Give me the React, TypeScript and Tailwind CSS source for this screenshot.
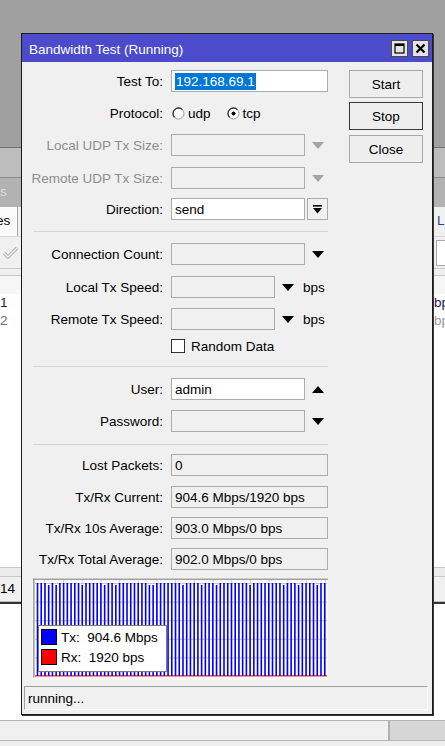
import React from "react";

const FONT = "font-['Liberation_Sans',Arial,sans-serif]";

function Tri({ up = false, color = "#000" }: { up?: boolean; color?: string }) {
  return (
    <svg width="12" height="7" viewBox="0 0 12 7" className="shrink-0">
      {up ? (
        <polygon points="0,7 12,7 6,0" fill={color} />
      ) : (
        <polygon points="0,0 12,0 6,7" fill={color} />
      )}
    </svg>
  );
}

function Row({
  label,
  disabled = false,
  className = "",
  children,
}: {
  label: string;
  disabled?: boolean;
  className?: string;
  children?: React.ReactNode;
}) {
  return (
    <div className={`flex h-[22px] items-center ${className}`}>
      <div
        className={`w-[149px] shrink-0 pr-[8px] pt-[2px] text-right whitespace-nowrap ${
          disabled ? "text-[#8d8d8d]" : "text-black"
        }`}
      >
        {label}
      </div>
      {children}
    </div>
  );
}

function Field({
  w,
  white = false,
  children,
}: {
  w: string;
  white?: boolean;
  children?: React.ReactNode;
}) {
  return (
    <div
      className={`h-[22px] ${w} shrink-0 border border-[#acacac] ${
        white ? "bg-white" : "bg-[#f0f0f0]"
      } pl-[3px] pt-[1px] leading-[20px] whitespace-nowrap overflow-hidden`}
    >
      {children}
    </div>
  );
}

function Radio({ checked = false }: { checked?: boolean }) {
  return (
    <svg width="13" height="13" viewBox="0 0 13 13" className="shrink-0">
      <circle cx="6.5" cy="6.5" r="5.5" fill="#fff" stroke="#9a9a9a" strokeWidth="1" />
      <path d="M2.6 10.4 A5.5 5.5 0 0 1 10.4 2.6" fill="none" stroke="#3a3a3a" strokeWidth="1.3" />
      {checked && <circle cx="6.5" cy="6.5" r="2" fill="#000" />}
    </svg>
  );
}

function Separator({ className = "" }: { className?: string }) {
  return <div className={`ml-[11px] h-px w-[295px] bg-[#d6d6d6] ${className}`} />;
}

function Button({ label, focused = false, className = "" }: { label: string; focused?: boolean; className?: string }) {
  return (
    <div
      className={`flex h-[28px] w-[74px] items-center justify-center border pt-[2px] ${
        focused ? "border-[#3a3a3a]" : "border-[#a8a8a8]"
      } bg-[#eeeeee] ${className}`}
    >
      {label}
    </div>
  );
}

function Graph() {
  const bars: React.ReactNode[] = [];
  for (let i = 0; i < 78; i++) {
    const x = 4.7 + i * 3.73;
    const short = (i * 7) % 9 === 3 || i % 13 === 5;
    const top = short ? 7 : 5;
    bars.push(<rect key={i} x={x} y={top} width={1.6} height={98 - top} fill="#0000ff" />);
  }
  const hLines: React.ReactNode[] = [];
  for (let k = 0; k < 5; k++) {
    const y = 5 + k * 18.6;
    hLines.push(<rect key={"h" + k} x={3} y={y} width={292} height={1} fill="#c8c8c8" />);
  }
  const vLines: React.ReactNode[] = [];
  for (let k = 0; k < 16; k++) {
    const x = 12.3 + k * 18.7;
    vLines.push(<rect key={"v" + k} x={x} y={2} width={1} height={96} fill="#d0d0d0" />);
  }
  return (
    <div className="relative ml-[10px] mt-[8px] h-[102px] w-[296px]">
      <svg width="296" height="102" viewBox="0 0 296 102" className="block">
        <rect x="0" y="0" width="296" height="102" fill="#f7f7f7" />
        <rect x="3" y="2" width="292" height="97" fill="#ffffff" />
        <rect x="1" y="0.5" width="295" height="1.6" fill="#a0a0a0" />
        <rect x="1" y="0.5" width="1.6" height="99" fill="#a0a0a0" />
        {vLines}
        {hLines}
        <rect x="3" y="97.2" width="292" height="1.3" fill="#ff2020" />
        {bars}
      </svg>
      <div className="absolute left-[6px] top-[47px] h-[47px] w-[129px] border border-[#7a7a7a] bg-white">
        <div className="ml-[2px] mt-[3px] flex h-[16px] items-center">
          <div className="h-[16px] w-[16px] border border-black bg-[#0000ff]" />
          <span className="ml-[4px] pt-[2px] whitespace-pre">Tx:  904.6 Mbps</span>
        </div>
        <div className="ml-[2px] mt-[4px] flex h-[16px] items-center">
          <div className="h-[16px] w-[16px] border border-black bg-[#ff0000]" />
          <span className="ml-[4px] pt-[2px] whitespace-pre">Rx:  1920 bps</span>
        </div>
      </div>
    </div>
  );
}

function Background() {
  return (
    <div className="flex h-full w-full flex-col">
      <div className="h-[147px] shrink-0 bg-[#a0a0a0]" />
      <div className="h-px shrink-0 bg-[#6e6e6e]" />
      <div className="h-[29px] shrink-0 bg-[#bdbdbd]" />
      <div className="h-px shrink-0 bg-[#8a8a8a]" />
      <div className="flex h-[29px] shrink-0 items-center bg-[#b2b2b2]">
        <span className="text-[#dcdcdc]">s</span>
      </div>
      <div className="flex h-[29px] shrink-0 items-stretch justify-between bg-[#f0f0f0]">
        <div className="flex w-[18px] items-center overflow-hidden border-r border-[#a8a8a8] bg-[#fbfbfb]">
          <span className="-ml-[4px]">es</span>
        </div>
        <div className="flex w-[8px] items-center overflow-hidden">
          <span className="text-[#2a3d9c]">L</span>
        </div>
      </div>
      <div className="flex h-[32px] shrink-0 items-center justify-between border-t border-[#d8d8d8] bg-[#f0f0f0]">
        <svg width="18" height="16" viewBox="0 0 18 16" className="ml-[2px]">
          <path d="M2 8 L6 12 L15 3" fill="none" stroke="#b0b0b0" strokeWidth="3.2" strokeLinejoin="miter" />
          <path d="M2 8 L6 12 L15 3" fill="none" stroke="#f4f4f4" strokeWidth="1.4" strokeLinejoin="miter" />
        </svg>
        <div className="h-[26px] w-[9px] border border-r-0 border-[#a8a8a8] bg-white" />
      </div>
      <div className="h-[8px] shrink-0 border-y border-[#c8c8c8] bg-[#f0f0f0]" />
      <div className="h-[18px] shrink-0 bg-[#f6f6f6]" />
      <div className="flex h-[18px] shrink-0 items-center justify-between bg-white">
        <span className="text-[#1a1a5a]">1</span>
        <span className="w-[11px] overflow-hidden text-[#1a1a5a]">bp</span>
      </div>
      <div className="flex h-[18px] shrink-0 items-center justify-between bg-white">
        <span className="text-[#6a6a6a]">2</span>
        <span className="w-[11px] overflow-hidden text-[#9a9a9a]">bp</span>
      </div>
      <div className="flex-1 bg-white" />
      <div className="h-[10px] shrink-0 border-y border-[#c8c8c8] bg-[#ececec]" />
      <div className="flex h-[25px] shrink-0 items-center border-b border-[#c0c0c0] bg-[#f0f0f0]">
        <span>14</span>
      </div>
      <div className="h-[2px] shrink-0 bg-[#333]" />
      <div className="h-[116px] shrink-0 bg-white" />
      <div className="flex h-[21px] shrink-0 border-y border-[#b4b4b4]">
        <div className="w-[390px] border-r-2 border-[#b0b0b0] bg-[#f0f0f0]" />
        <div className="flex-1 bg-[#d6d6d6]" />
      </div>
      <div className="h-[5px] shrink-0 bg-[#efefef]" />
    </div>
  );
}

export default function App() {
  return (
    <div className={`relative h-[746px] w-[445px] overflow-hidden bg-[#a0a0a0] text-[13.5px] text-black ${FONT}`}>
      <Background />
      <div className="absolute left-[21px] top-[33px] flex h-[682px] w-[412px] flex-col border border-[#1c1c1c] bg-[#f0f0f0] shadow-[1px_1px_0_#3a3a3a]">
        {/* Title bar */}
        <div className="flex h-[28px] shrink-0 items-center bg-[#4b4bcb] pl-[7px] pr-[3px]">
          <span className="flex-1 pt-[4px] text-white">Bandwidth Test (Running)</span>
          <svg width="17" height="17" viewBox="0 0 17 17" className="shrink-0">
            <rect x="0.5" y="0.5" width="16" height="16" fill="#e4e4e4" stroke="#4a4a4a" />
            <rect x="4" y="4" width="9" height="9" fill="none" stroke="#000" strokeWidth="1.2" />
            <rect x="4" y="4" width="9" height="2" fill="#000" />
          </svg>
          <svg width="17" height="17" viewBox="0 0 17 17" className="ml-[4px] shrink-0">
            <rect x="0.5" y="0.5" width="16" height="16" fill="#e4e4e4" stroke="#4a4a4a" />
            <path d="M4.5 4.5 L12.5 12.5 M12.5 4.5 L4.5 12.5" stroke="#000" strokeWidth="2.2" />
          </svg>
        </div>

        {/* Body */}
        <div className="flex flex-1 flex-col">
          <div className="flex pt-[8px]">
            <div className="flex w-[306px] shrink-0 flex-col">
              <Row label="Test To:">
                <Field w="w-[157px]" white>
                  <span className="bg-[#0078d7] px-[1px] py-[1px] text-white">192.168.69.1</span>
                </Field>
              </Row>
              <Row label="Protocol:" className="mt-[10px]">
                <div className="ml-[1px] flex items-center">
                  <Radio />
                  <span className="ml-[3px] pt-[2px]">udp</span>
                  <div className="ml-[16px]">
                    <Radio checked />
                  </div>
                  <span className="ml-[3px] pt-[2px]">tcp</span>
                </div>
              </Row>
              <Row label="Local UDP Tx Size:" disabled className="mt-[10px]">
                <Field w="w-[134px]" />
                <div className="ml-[7px]">
                  <Tri color="#a4a4a4" />
                </div>
              </Row>
              <Row label="Remote UDP Tx Size:" disabled className="mt-[11px]">
                <Field w="w-[134px]" />
                <div className="ml-[7px]">
                  <Tri color="#a4a4a4" />
                </div>
              </Row>
              <Row label="Direction:" className="mt-[9px]">
                <Field w="w-[134px]" white>
                  send
                </Field>
                <div className="ml-[2px] flex h-[22px] w-[22px] items-center justify-center border border-[#acacac] bg-[#f0f0f0]">
                  <svg width="9" height="9" viewBox="0 0 9 9">
                    <rect x="0" y="0" width="9" height="1.6" fill="#000" />
                    <polygon points="0,3 9,3 4.5,8.5" fill="#000" />
                  </svg>
                </div>
              </Row>
              <Separator className="mt-[11px]" />
              <Row label="Connection Count:" className="mt-[11px]">
                <Field w="w-[134px]" />
                <div className="ml-[7px]">
                  <Tri />
                </div>
              </Row>
              <Row label="Local Tx Speed:" className="mt-[11px]">
                <Field w="w-[104px]" />
                <div className="ml-[7px]">
                  <Tri />
                </div>
                <span className="ml-[9px] pt-[2px]">bps</span>
              </Row>
              <Row label="Remote Tx Speed:" className="mt-[10px]">
                <Field w="w-[104px]" />
                <div className="ml-[7px]">
                  <Tri />
                </div>
                <span className="ml-[9px] pt-[2px]">bps</span>
              </Row>
              <div className="mt-[6px] flex h-[20px] items-center pl-[149px]">
                <div className="h-[14px] w-[14px] border border-[#333] bg-white" />
                <span className="ml-[6px] pt-[2px]">Random Data</span>
              </div>
              <Separator className="mt-[10px]" />
              <Row label="User:" className="mt-[11px]">
                <Field w="w-[134px]" white>
                  admin
                </Field>
                <div className="ml-[7px]">
                  <Tri up />
                </div>
              </Row>
              <Row label="Password:" className="mt-[10px]">
                <Field w="w-[134px]" />
                <div className="ml-[7px]">
                  <Tri />
                </div>
              </Row>
              <Separator className="mt-[12px]" />
              <Row label="Lost Packets:" className="mt-[9px]">
                <Field w="w-[157px]">0</Field>
              </Row>
              <Row label="Tx/Rx Current:" className="mt-[10px]">
                <Field w="w-[157px]">904.6 Mbps/1920 bps</Field>
              </Row>
              <Row label="Tx/Rx 10s Average:" className="mt-[9px]">
                <Field w="w-[157px]">903.0 Mbps/0 bps</Field>
              </Row>
              <Row label="Tx/Rx Total Average:" className="mt-[9px]">
                <Field w="w-[157px]">902.0 Mbps/0 bps</Field>
              </Row>
              <Graph />
            </div>
            <div className="ml-[21px] flex w-[74px] flex-col">
              <Button label="Start" />
              <Button label="Stop" focused className="mt-[4px]" />
              <Button label="Close" className="mt-[5px]" />
            </div>
          </div>
          <div className="ml-[2px] mt-[6px] flex h-[24px] w-[404px] items-center border border-b-white border-l-[#a0a0a0] border-r-white border-t-[#a0a0a0] pl-[3px] pt-[2px]">
            running...
          </div>
        </div>
      </div>
    </div>
  );
}
